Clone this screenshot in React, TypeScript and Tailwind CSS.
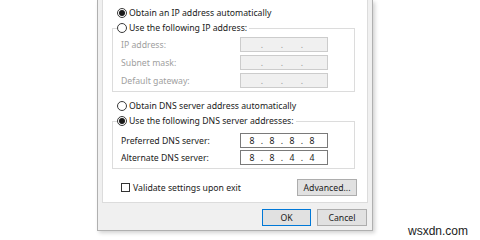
import React from "react";

function Radio({ checked }: { checked?: boolean }) {
  return (
    <span className="w-[10px] h-[10px] rounded-full border border-[#3a3a3a] bg-white flex items-center justify-center shrink-0">
      {checked && <span className="w-[6px] h-[6px] rounded-full bg-[#1a1a1a]" />}
    </span>
  );
}

function IpField({ values, disabled }: { values: string[]; disabled?: boolean }) {
  return (
    <div
      className={
        "w-[88px] h-[15px] border flex items-center pl-[3px] " +
        (disabled ? "bg-[#f0f0f0] border-[#cccccc] text-[#9a9a9a]" : "bg-white border-[#7a7a7a] text-[#1a1a1a]")
      }
    >
      {values.map((v, i) => (
        <React.Fragment key={i}>
          <span className="w-[16px] text-center">{v}</span>
          {i < 3 && <span className="w-[4px] text-center">.</span>}
        </React.Fragment>
      ))}
    </div>
  );
}

function Row({ label, values, disabled }: { label: string; values: string[]; disabled?: boolean }) {
  return (
    <div className="flex items-center">
      <span className={"w-[127px] pl-[8px] " + (disabled ? "text-[#a0a0a0]" : "text-[#1a1a1a]")}>{label}</span>
      <IpField values={values} disabled={disabled} />
    </div>
  );
}

function Button({ children, primary, w }: { children: React.ReactNode; primary?: boolean; w: string }) {
  return (
    <div
      className={
        "h-[17px] flex items-center justify-center bg-[#e1e1e1] border text-[#1a1a1a] " +
        w +
        " " +
        (primary ? "border-[#0078d7]" : "border-[#adadad]")
      }
    >
      {children}
    </div>
  );
}

export default function App() {
  const empty = ["", "", "", ""];
  return (
    <div
      className="w-[480px] h-[240px] bg-white flex overflow-hidden text-[8.7px] leading-[12px] text-[#1a1a1a]"
      style={{ fontFamily: '"Noto Sans", "DejaVu Sans", sans-serif' }}
    >
      <div className="w-[97px] shrink-0" />
      <div className="w-[276px] h-[231px] shrink-0 bg-[#f0f0f0] border-x border-b border-[#b0b0b0] shadow-[2px_2px_4px_rgba(0,0,0,0.18)] px-[4px] flex flex-col">
        <div className="h-[203px] bg-white border-x border-b border-[#dcdcdc] pl-[9px] pt-[7px] flex flex-col">
          <div className="flex items-center gap-[2px] pl-[5px] h-[12px]">
            <Radio checked />
            <span>Obtain an IP address automatically</span>
          </div>
          <fieldset className="mt-[3px] w-[243px] border border-[#dcdcdc] pb-[3px]">
            <legend className="ml-[4px] pr-[2px] flex items-center gap-[2px] h-[12px]">
              <Radio />
              <span>Use the following IP address:</span>
            </legend>
            <div className="mt-[3px] flex flex-col gap-[3px]">
              <Row label="IP address:" values={empty} disabled />
              <Row label="Subnet mask:" values={empty} disabled />
              <Row label="Default gateway:" values={empty} disabled />
            </div>
          </fieldset>
          <div className="mt-[8px] flex items-center gap-[2px] pl-[5px] h-[12px]">
            <Radio />
            <span>Obtain DNS server address automatically</span>
          </div>
          <fieldset className="mt-[3px] w-[243px] border border-[#dcdcdc] pb-[3px]">
            <legend className="ml-[4px] pr-[2px] flex items-center gap-[2px] h-[12px]">
              <Radio checked />
              <span>Use the following DNS server addresses:</span>
            </legend>
            <div className="mt-[6px] flex flex-col gap-[2px]">
              <Row label="Preferred DNS server:" values={["8", "8", "8", "8"]} />
              <Row label="Alternate DNS server:" values={["8", "8", "4", "4"]} />
            </div>
          </fieldset>
          <div className="mt-[10px] flex items-center w-[243px]">
            <div className="flex items-center gap-[3px] pl-[9px]">
              <span className="w-[9px] h-[9px] border border-[#333333] bg-white" />
              <span>Validate settings upon exit</span>
            </div>
            <div className="ml-auto mr-[-2px]">
              <Button w="w-[60px]">Advanced...</Button>
            </div>
          </div>
        </div>
        <div className="flex justify-end gap-[6px] pt-[6px] pr-[1px]">
          <Button primary w="w-[49px]">OK</Button>
          <Button w="w-[50px]">Cancel</Button>
        </div>
      </div>
      <div className="flex-1 flex items-end justify-end pr-[12px] pb-[2px]">
        <span className="text-[12px] leading-[14px] text-[#222222]" style={{ fontFamily: '"Liberation Sans", Arial, sans-serif' }}>
          wsxdn.com
        </span>
      </div>
    </div>
  );
}
